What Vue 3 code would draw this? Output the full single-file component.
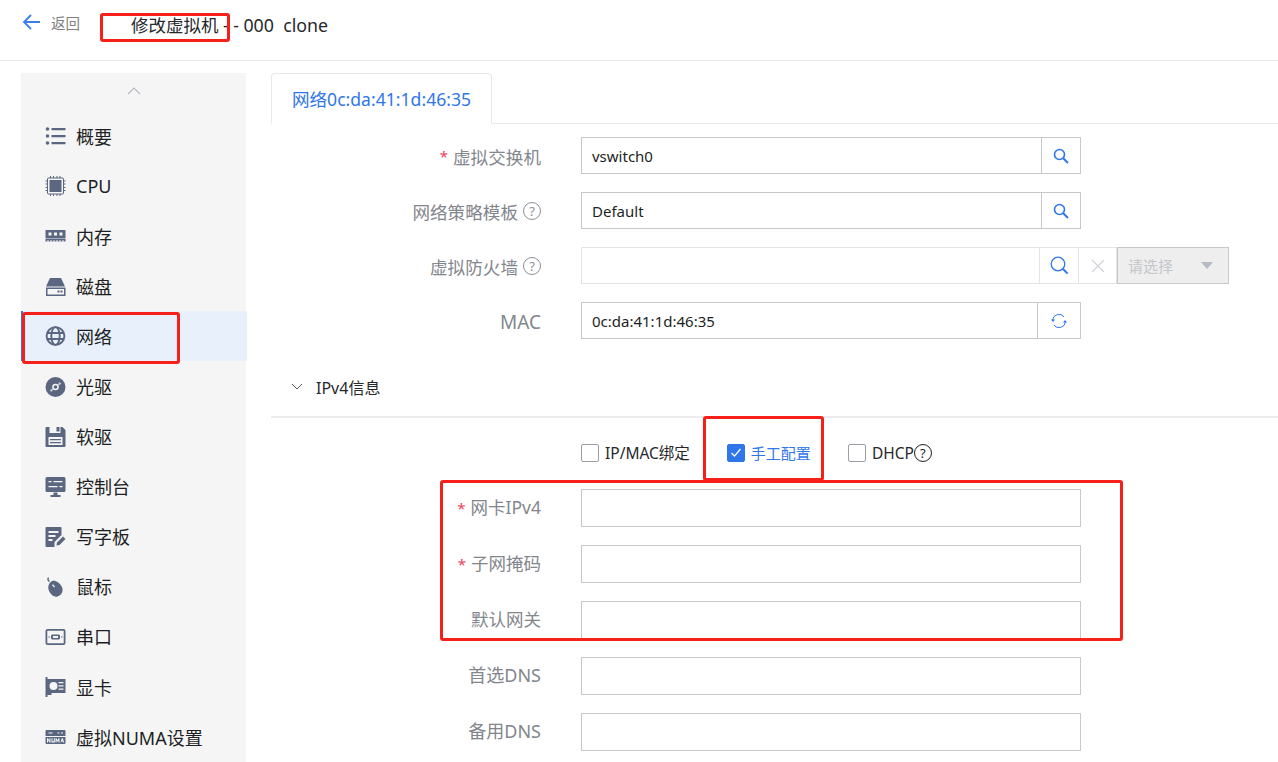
<script setup>
const icons = {
  list: '<circle cx="2" cy="3" r="1.800"/><circle cx="2" cy="10" r="1.800"/><circle cx="2" cy="17" r="1.800"/><path d="M6 2h14v2.200H6zM6 9h14v2.200H6zM6 16h14v2.200H6z"/>',
  cpu: '<path d="M3 2h14a1 1 0 0 1 1 1v14a1 1 0 0 1-1 1H3a1 1 0 0 1-1-1V3a1 1 0 0 1 1-1z" fill="none" stroke="#5b6780"/><path d="M4 4h12v12H4zM0 4.500h2v1H0zM0 7.500h2v1H0zM0 11h2v1H0zM0 14h2v1H0zM18 4.500h2v1h-2zM18 7.500h2v1h-2zM18 11h2v1h-2zM18 14h2v1h-2zM4.500 0h1v2h-1zM7.500 0h1v2h-1zM11 0h1v2h-1zM14 0h1v2h-1zM4.500 18h1v2h-1zM7.500 18h1v2h-1zM11 18h1v2h-1zM14 18h1v2h-1z"/>',
  mem: '<path fill-rule="evenodd" d="M0 4h20v8H0zM3 6.500v3h3v-3zM8.500 6.500v3h3v-3zM14 6.500v3h3v-3z"/><path d="M0 12.500h20v3H18v-1.500h-1v1.500h-2v-1.500h-1v1.500h-2v-1.500h-1v1.500H9v-1.500H8v1.500H6v-1.500H5v1.500H3v-1.500H2v1.500H0z"/>',
  disk: '<path d="M4.500 2h11l4 8.500H.500z"/><path fill-rule="evenodd" d="M.500 11.500h19.500V20H.500zM2 13v5.500h16.500V13z"/><path d="M12 14.500h2v2h-2zM15 14.500h2v2h-2z"/>',
  globe: '<g fill="none" stroke="#5b6780" stroke-width="1.900"><circle cx="10" cy="10" r="8.900"/><ellipse cx="10" cy="10" rx="4.200" ry="8.900"/><path d="M1.500 7h17M1.500 13h17"/></g>',
  cd: '<circle cx="10" cy="10" r="10"/><circle cx="10" cy="10" r="3.300" fill="#f5f5f5"/><circle cx="10" cy="10" r="1.800"/><path d="M4.200 13.200l2.600-1.700.9 1.100-1.700 2.500zM15.800 6.800l-2.600 1.700-.9-1.100 1.700-2.500z" fill="#c4c8d0"/>',
  save: '<path fill-rule="evenodd" d="M1 0h3v6h11V0h2l3 3v16a1 1 0 0 1-1 1H1a1 1 0 0 1-1-1V1a1 1 0 0 1 1-1zM3 10v8h14v-8z"/><path d="M11 0h3v4.500h-3zM4.500 12h11v1.300h-11zM4.500 15h11v1.300h-11z"/>',
  console: '<path fill-rule="evenodd" d="M1.500 0h17A1.500 1.500 0 0 1 20 1.500v12a1.500 1.500 0 0 1-1.500 1.500h-17A1.500 1.500 0 0 1 0 13.500v-12A1.500 1.500 0 0 1 1.500 0zM3 4v1.200h14V4zM3 9v1.200h14V9z"/><path d="M6 2.800h2v3.500H6zM12 7.800h2v3.500h-2zM8 15.500h4V18h3v2H5v-2h3z"/>',
  pad: '<path fill-rule="evenodd" d="M1 0h14a1 1 0 0 1 1 1v7l-7 7v5H1a1 1 0 0 1-1-1V1a1 1 0 0 1 1-1zM3 4v2h10V4zM3 8v2h7V8zM3 12v2h4v-2z"/><path d="M11 18.500l.5-3 6-6 2.500 2.500-6 6z"/>',
  mouse: '<path d="M3 .500C2 2 2.500 3.500 4 4.500" fill="none" stroke="#5b6780" stroke-width="1.300"/><path fill-rule="evenodd" d="M6.500 4C10 3 14.500 6 16.500 10c1.700 4-.5 8.500-4.500 9.500C8 20.500 4.500 17 3 12.500 2.200 9 3.500 5.500 6.500 4zM6.500 8l2 2.500 1-.8-2-2.500z"/>',
  serial: '<path fill-rule="evenodd" d="M2 2h16a2 2 0 0 1 2 2v12a2 2 0 0 1-2 2H2a2 2 0 0 1-2-2V4a2 2 0 0 1 2-2zM1.800 3.800v12.400h16.400V3.800z"/><path fill-rule="evenodd" d="M6.500 7.500h7l1 1v3l-1 1h-7l-1-1v-3zM7.500 9v2h5V9z"/><path d="M3 9.500h1.500v1H3zM15.500 9.500H17v1h-1.500z"/>',
  gpu: '<path fill-rule="evenodd" d="M0 0h2v2h18v14H6v2H2v2H0zM8 5a4 4 0 1 0 0 8a4 4 0 0 0 0-8zM13 5v1.300h5V5zM13 8.300v1.300h5V8.300zM13 11.500v1.300h5v-1.300z"/>',
  numa: '<path d="M1 3h18a1 1 0 0 1 1 1v5H0V4a1 1 0 0 1 1-1zM0 10h20v6a1 1 0 0 1-1 1H1a1 1 0 0 1-1-1z"/><path d="M3 5.500h4v1H3zM12 5.500h2v1h-2zM15.500 5.500h2v1h-2z" fill="#f5f5f5"/><path d="M1.500 11.300h1l1.500 2.400v-2.400h1V15.500H4l-1.500-2.400v2.400h-1zM6 11.300h1v3h1.300v-3h1v4.200H6zM10 15.500v-4.200h1l1 2 1-2h1v4.200h-1v-2.300l-1 1.800-1-1.800v2.300zM15 15.500l1.300-4.200h1l1.400 4.200h-1l-.3-1h-1.500l-.3 1z" fill="#f5f5f5"/>'
}
const menu = [
  ['list', '概要'], ['cpu', 'CPU'], ['mem', '内存'], ['disk', '磁盘'], ['globe', '网络'], ['cd', '光驱'],
  ['save', '软驱'], ['console', '控制台'], ['pad', '写字板'], ['mouse', '鼠标'], ['serial', '串口'], ['gpu', '显卡'], ['numa', '虚拟NUMA设置']
]
const ipRows = [
  ['网卡IPv4', true, ''], ['子网掩码', true, ''], ['默认网关', false, ''], ['首选DNS', false, 'wide'], ['备用DNS', false, 'wide']
]
</script>

<template>
  <div class="page">
    <header class="top">
      <svg class="back" width="20" height="16" viewBox="0 0 20 16"><path d="M18 8H2M9 1L2 8l7 7" fill="none" stroke="#3b7ded" stroke-width="1.800"/></svg>
      <span class="back-text">返回</span>
      <span class="title">修改虚拟机<span class="dash"> - - </span><span class="latin">000&nbsp; clone</span></span>
    </header>
    <div class="body">
      <aside class="side">
        <div class="up"><svg width="14" height="8" viewBox="0 0 14 8"><path d="M1 7l6-6 6 6" fill="none" stroke="#b5b9c0" stroke-width="1.200"/></svg></div>
        <div v-for="(m, i) in menu" :key="m[1]" class="item" :class="{ active: i === 4 }">
          <svg class="mi" width="21" height="20" viewBox="0 0 20 20" fill="#5b6780" v-html="icons[m[0]]"></svg>
          <span>{{ m[1] }}</span>
        </div>
      </aside>
      <main class="main">
        <div class="tabs"><div class="tab">网络0c:da:41:1d:46:35</div></div>
        <div class="form">
          <div class="row">
            <label class="lab"><i>*</i>虚拟交换机</label>
            <div class="group">
              <div class="field">vswitch0</div>
              <div class="addon">
                <svg width="16" height="16" viewBox="0 0 16 16"><circle cx="6.500" cy="6.500" r="5" fill="none" stroke="#2f76ea" stroke-width="1.600"/><path d="M10 10l5 5" stroke="#2f76ea" stroke-width="2"/></svg>
              </div>
            </div>
          </div>
          <div class="row">
            <label class="lab">网络策略模板<span class="q">?</span></label>
            <div class="group">
              <div class="field">Default</div>
              <div class="addon">
                <svg width="16" height="16" viewBox="0 0 16 16"><circle cx="6.500" cy="6.500" r="5" fill="none" stroke="#2f76ea" stroke-width="1.600"/><path d="M10 10l5 5" stroke="#2f76ea" stroke-width="2"/></svg>
              </div>
            </div>
          </div>
          <div class="row">
            <label class="lab">虚拟防火墙<span class="q">?</span></label>
            <div class="group light">
              <div class="field grow"></div>
              <div class="addon a39">
                <svg width="19" height="19" viewBox="0 0 19 19"><circle cx="8" cy="8" r="6.800" fill="none" stroke="#2f76ea" stroke-width="1.300"/><path d="M12.800 12.800l4.800 4.800" stroke="#2f76ea" stroke-width="2"/></svg>
              </div>
              <div class="addon a38">
                <svg width="14" height="14" viewBox="0 0 14 14"><path d="M1 1l12 12M13 1L1 13" stroke="#cfd2d8" stroke-width="1.200"/></svg>
              </div>
              <div class="select">
                <span>请选择</span>
                <svg width="12" height="7" viewBox="0 0 12 7"><path d="M0 0h12L6 7z" fill="#b6bac2"/></svg>
              </div>
            </div>
          </div>
          <div class="row">
            <label class="lab mac">MAC</label>
            <div class="group">
              <div class="field">0c:da:41:1d:46:35</div>
              <div class="addon a44">
                <svg width="16" height="16" viewBox="0 0 16 16"><path d="M1.500 7A6.500 6.500 0 0 1 13 3.800M14.500 9A6.500 6.500 0 0 1 3 12.200" fill="none" stroke="#2f76ea" stroke-width="1"/><path d="M0 6.500h4L2 9zM16 9.500h-4L14 7z" fill="#2f76ea"/></svg>
              </div>
            </div>
          </div>
        </div>

        <div class="section">
          <svg width="12" height="7" viewBox="0 0 12 7"><path d="M1 1l5 5 5-5" fill="none" stroke="#555" stroke-width="1"/></svg>
          <span>IPv4信息</span>
        </div>

        <div class="checks">
          <label class="check"><span class="box"></span>IP/MAC绑定</label>
          <label class="check on">
            <span class="box"><svg width="12" height="10" viewBox="0 0 12 10"><path d="M1.500 5l3 3 6-7" fill="none" stroke="#fff" stroke-width="1.200"/></svg></span>手工配置
          </label>
          <label class="check"><span class="box"></span>DHCP<span class="q dark">?</span></label>
        </div>

        <div class="ip">
          <div v-for="r in ipRows" :key="r[0]" class="ip-row">
            <label class="lab2" :class="r[2]"><i v-if="r[1]">*</i>{{ r[0] }}</label>
            <div class="ip-input"></div>
          </div>
        </div>
      </main>
    </div>
    <div class="mark m1"></div>
    <div class="mark m2"></div>
    <div class="mark m3"></div>
    <div class="mark m4"></div>
  </div>
</template>

<style scoped>
.page {
  position: relative;
  width: 1278px;
  height: 762px;
  overflow: hidden;
  background: #fff;
  font-family: "Noto Sans", "Noto Sans CJK SC", sans-serif;
  color: #1d1f24;
}
.top {
  height: 50px;
  border-bottom: 1px solid #e9e9ec;
  display: flex;
  align-items: center;
  padding-left: 22px;
  padding-bottom: 10px;
}
.back { margin-top: -6px; }
.back-text { margin: -6px 0 0 9px; font-size: 14.500px; color: #808080; width: 30px; white-space: nowrap; }
.title { margin: -2px 0 0 50px; font-size: 17.500px; white-space: nowrap; color: #26282c; }
.latin { font-size: 17.800px; }
.dash { white-space: pre; }
.body { display: flex; padding: 12px 0 0 21px; }
.side {
  width: 225px;
  height: 689px;
  background: #f5f5f5;
  flex: none;
}
.up { height: 38px; display: flex; justify-content: center; align-items: center; }
.up svg { margin-top: -2px; }
.item {
  height: 50.100px;
  display: flex;
  align-items: center;
  padding-left: 24px;
  font-size: 18px;
  color: #1d1f24;
  white-space: nowrap;
  position: relative;
}
.item span { margin: -1px 0 0 10px; }
.item .mi { flex: none; }
.item.active {
  background: #e8f0fb;
  width: 226px;
  box-sizing: border-box;
  border-left: 2px solid #2f76ea;
  padding-left: 22px;
}
.main { margin-left: 25px; flex: 1; min-width: 0; }
.tabs { height: 50px; border-bottom: 1px solid #e9e9ec; }
.tab {
  width: 221px;
  height: 51px;
  box-sizing: border-box;
  border: 1px solid #e6e8ec;
  border-bottom: 1px solid #fff;
  border-radius: 4px 4px 0 0;
  background: #fff;
  color: #2f76ea;
  font-size: 17.600px;
  line-height: 50px;
  text-align: center;
  white-space: nowrap;
}
.form { padding-top: 13px; }
.row { display: flex; align-items: center; height: 37px; margin-bottom: 18px; }
.lab {
  width: 270px;
  flex: none;
  font-size: 17.600px;
  color: #83868c;
  white-space: nowrap;
  display: flex;
  justify-content: flex-end;
  align-items: center;
  padding-top: 1px;
  box-sizing: border-box;
}
.lab.mac { font-size: 19px; padding-top: 3px; }
.lab i, .lab2 i { color: #e8445a; font-style: normal; font-size: 15px; margin-right: 5px; }
.q {
  display: inline-block;
  width: 18px;
  height: 18px;
  line-height: 16px;
  margin-left: 5px;
  border: 1px solid #8d9097;
  border-radius: 50%;
  box-sizing: border-box;
  text-align: center;
  font-size: 13px;
  color: #8d9097;
  flex: none;
}
.q.dark { border-color: #1d1f24; color: #1d1f24; margin-left: 0; }
.group { margin-left: 40px; width: 500px; height: 37px; display: flex; }
.field {
  flex: 1;
  border: 1px solid #c8c8c8;
  box-sizing: border-box;
  padding-left: 10px;
  font-size: 15px;
  line-height: 36px;
  color: #1d1f24;
  white-space: nowrap;
}
.addon {
  width: 39px;
  flex: none;
  box-sizing: border-box;
  border: 1px solid #c8c8c8;
  border-left: none;
  display: flex;
  align-items: center;
  justify-content: center;
}
.a44 { width: 43px; }
.group.light { width: 648px; }
.group.light .field { flex: none; width: 459px; border-color: #e2e4e8; }
.group.light .addon { border-color: #e2e4e8; }
.a39 { width: 39px !important; }
.a38 { width: 38px !important; }
.select {
  width: 112px;
  box-sizing: border-box;
  background: #eeeeee;
  border: 1px solid #c8c8c8;
  display: flex;
  align-items: center;
  justify-content: space-between;
  padding: 0 15px 0 10px;
  color: #c3c5ca;
  font-size: 15px;
  white-space: nowrap;
}
.section {
  height: 59px;
  margin-top: 6px;
  padding-left: 20px;
  display: flex;
  align-items: center;
  gap: 13px;
  font-size: 16px;
  border-bottom: 2px solid #ececef;
  color: #26282c;
  white-space: nowrap;
}
.checks {
  margin-left: 310px;
  height: 71px;
  display: flex;
  align-items: center;
  font-size: 15.500px;
  color: #26282c;
  white-space: nowrap;
  padding-bottom: 2px;
  box-sizing: border-box;
}
.check { display: flex; align-items: center; margin-right: 37px; }
.check.on { color: #2f76ea; font-size: 15px; }
.box {
  width: 18px;
  height: 18px;
  box-sizing: border-box;
  border: 1px solid #9b9ea5;
  border-radius: 2px;
  margin-right: 6px;
  display: flex;
  align-items: center;
  justify-content: center;
  background: #fff;
}
.check.on .box { background: #2f76ea; border-color: #2f76ea; }
.ip { display: flex; flex-direction: column; gap: 18px; }
.ip-row { display: flex; align-items: center; height: 38px; }
.lab2 {
  width: 270px;
  flex: none;
  text-align: right;
  font-size: 17.500px;
  color: #83868c;
  white-space: nowrap;
  margin-top: -3px;
}
.lab2.wide { font-size: 18px; margin-top: -5px; }
.ip-input {
  margin-left: 40px;
  width: 500px;
  height: 38px;
  border: 1px solid #c8c8c8;
  box-sizing: border-box;
}
.mark {
  position: absolute;
  border: 3px solid #f5201a;
  border-radius: 3px;
  box-sizing: border-box;
  pointer-events: none;
}
.m1 { left: 100px; top: 13px; width: 130px; height: 29px; }
.m2 { left: 22px; top: 312px; width: 158px; height: 52px; }
.m3 { left: 703px; top: 416px; width: 121px; height: 65px; }
.m4 { left: 440px; top: 480px; width: 683px; height: 161px; }
</style>
